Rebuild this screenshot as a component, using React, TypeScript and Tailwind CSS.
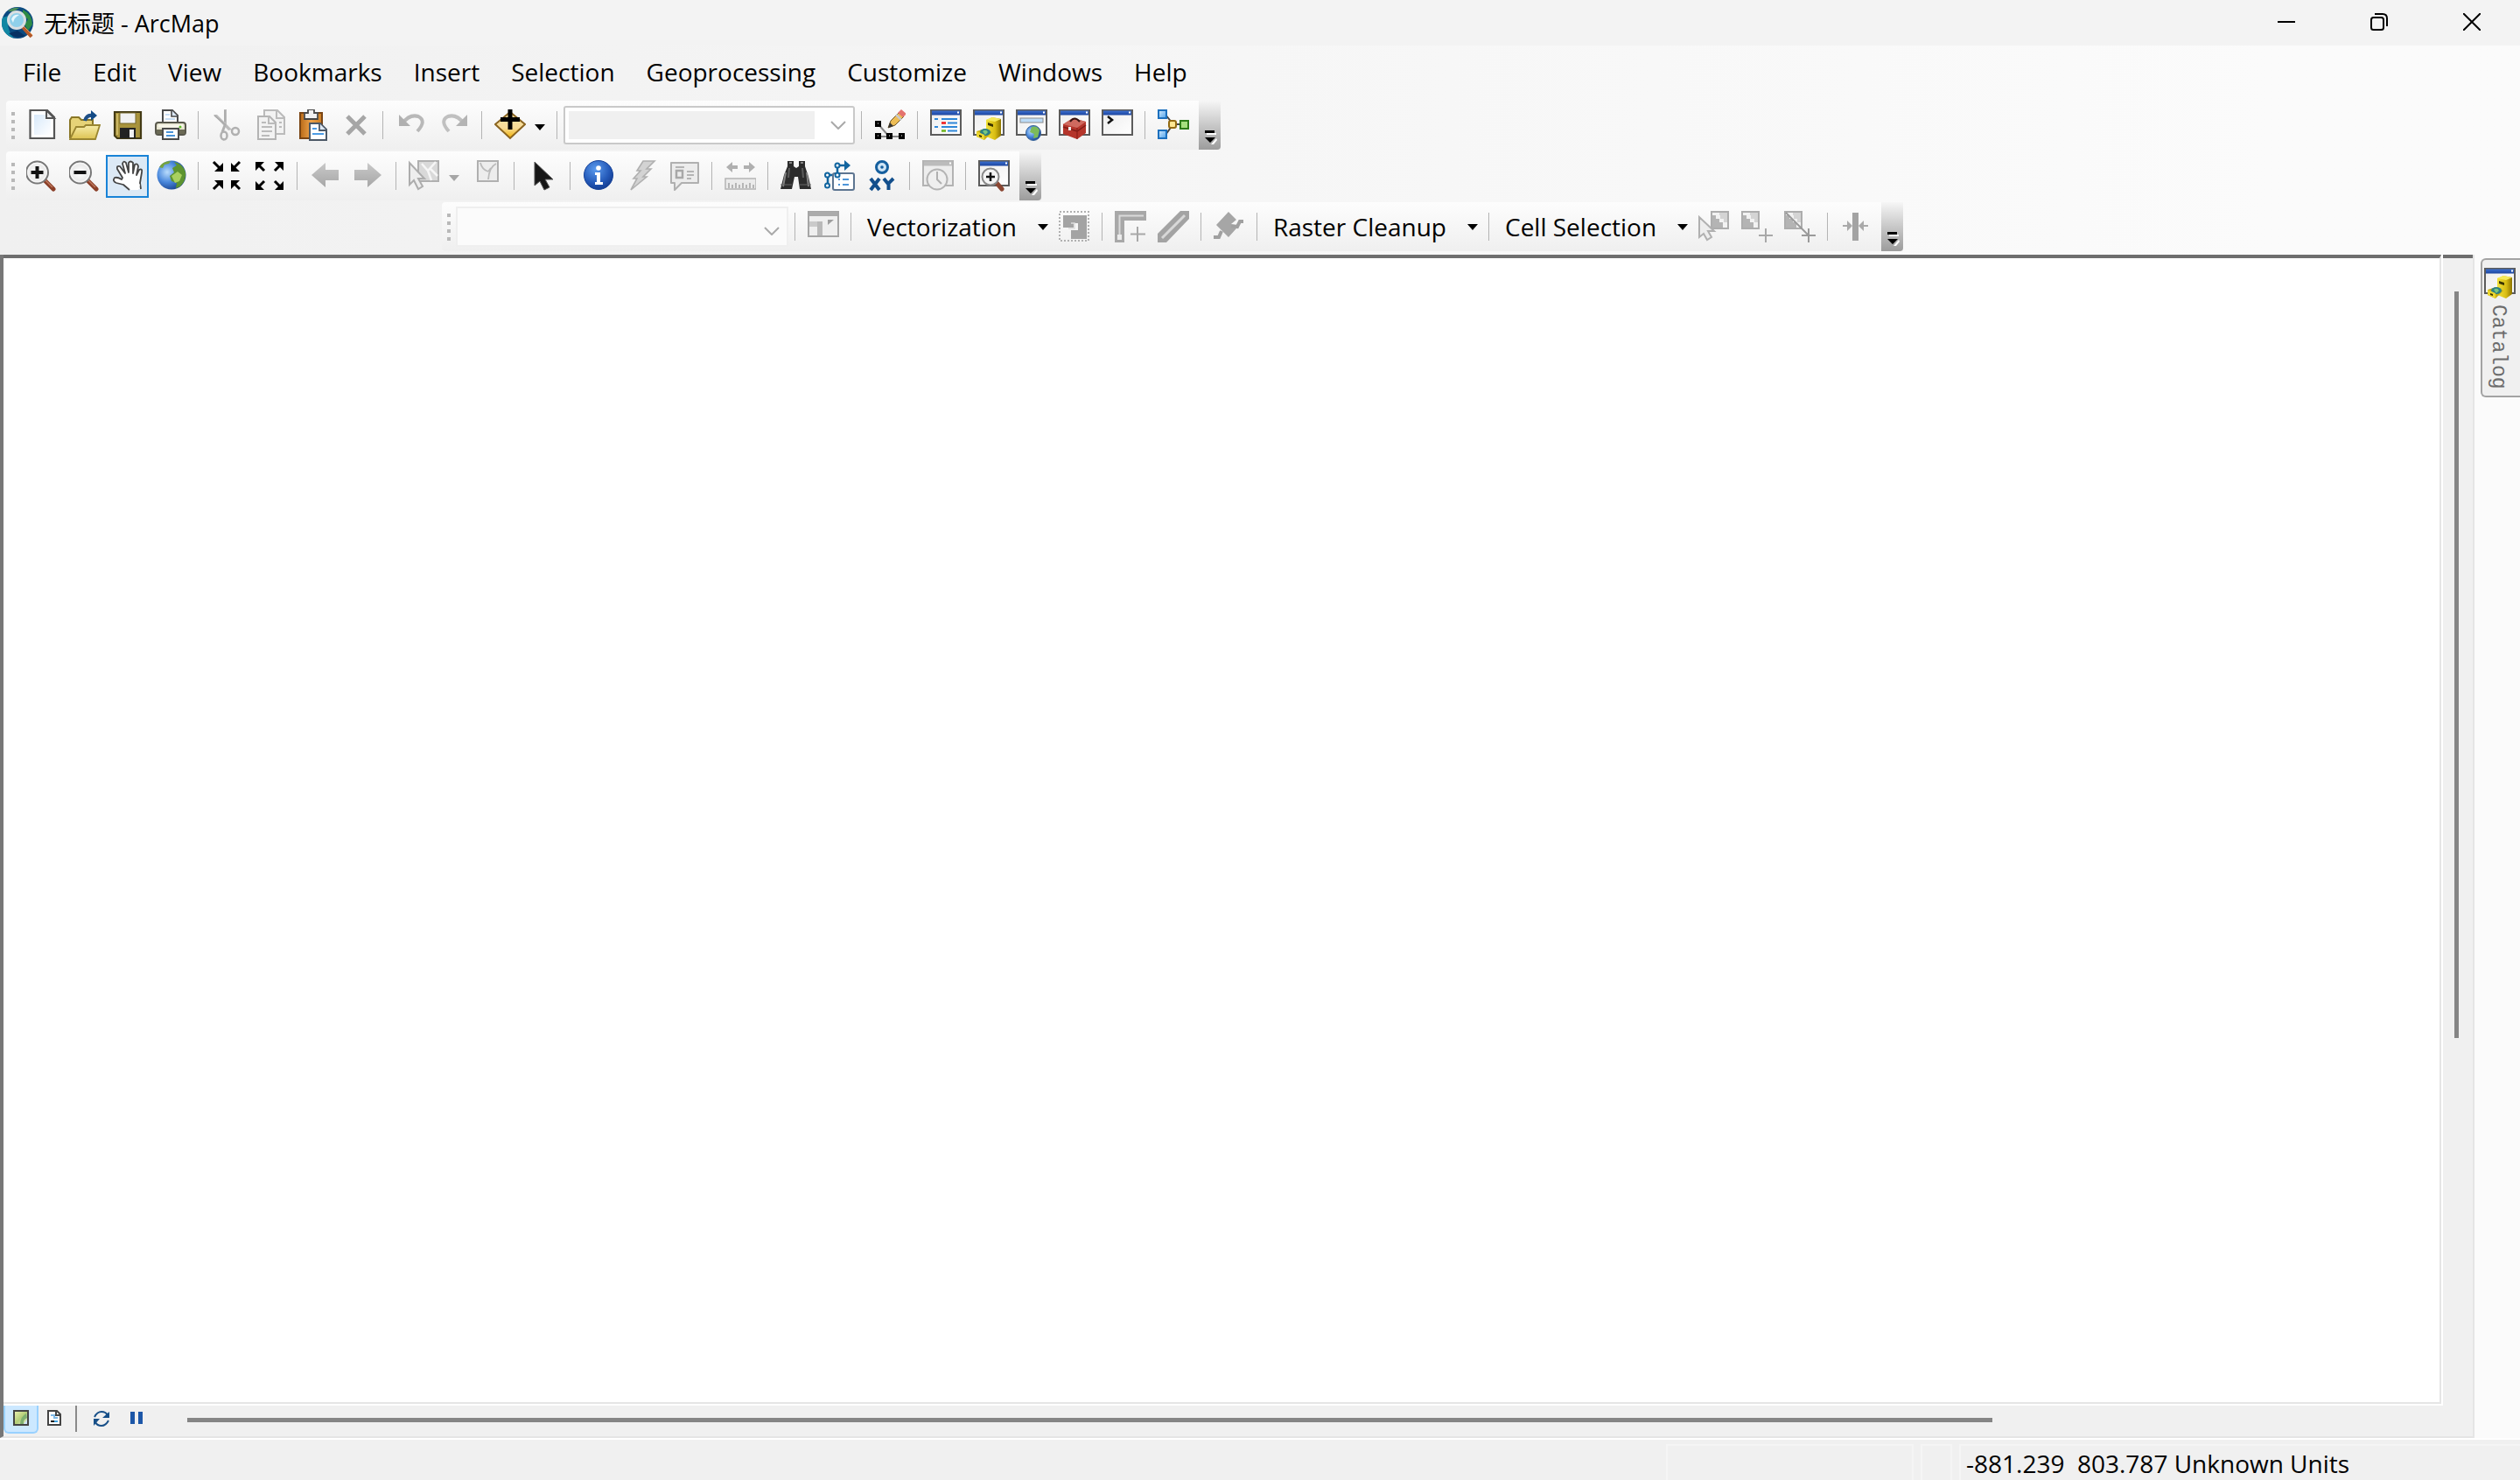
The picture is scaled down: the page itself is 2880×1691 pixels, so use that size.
import React from 'react';

interface IconProps {
  children: React.ReactNode;
  className?: string;
}

const Icon: React.FC<IconProps> = ({ children, className = '' }) => (
  <svg viewBox="0 0 36 36" fill="none" aria-hidden="true" className={`block h-9 w-9 shrink-0 ${className}`}>
    {children}
  </svg>
);

// Shared gradients for the toolbar drawings
const Gradients = () => (
  <svg width="0" height="0" className="absolute" aria-hidden="true">
    <defs>
      <linearGradient id="gold" x1="0" y1="0" x2="0" y2="1">
        <stop offset="0" stopColor="#f8e3a6" />
        <stop offset="0.6" stopColor="#f8dc98" />
        <stop offset="1" stopColor="#f0b000" />
      </linearGradient>
      <linearGradient id="folder" x1="0" y1="0" x2="0" y2="1">
        <stop offset="0" stopColor="#f7edaa" />
        <stop offset="1" stopColor="#dcc352" />
      </linearGradient>
      <linearGradient id="cabinet" x1="0" y1="0" x2="1" y2="0">
        <stop offset="0" stopColor="#f2e23a" />
        <stop offset="0.6" stopColor="#d9bd13" />
        <stop offset="1" stopColor="#8d7500" />
      </linearGradient>
      <linearGradient id="caption" x1="0" y1="0" x2="0" y2="1">
        <stop offset="0" stopColor="#3a6fd0" />
        <stop offset="1" stopColor="#1c449e" />
      </linearGradient>
      <linearGradient id="paper" x1="0" y1="0" x2="1" y2="1">
        <stop offset="0" stopColor="#d8e9fa" />
        <stop offset="1" stopColor="#ffffff" />
      </linearGradient>
      <linearGradient id="body" x1="0" y1="0" x2="1" y2="1">
        <stop offset="0" stopColor="#ececec" />
        <stop offset="1" stopColor="#ffffff" />
      </linearGradient>
      <linearGradient id="clip" x1="0" y1="0" x2="1" y2="0">
        <stop offset="0" stopColor="#b96a18" />
        <stop offset="0.5" stopColor="#eda24a" />
        <stop offset="1" stopColor="#cc7d22" />
      </linearGradient>
      <linearGradient id="greyArrow" x1="0" y1="0" x2="0" y2="1">
        <stop offset="0" stopColor="#c9c9c9" />
        <stop offset="1" stopColor="#a6a6a6" />
      </linearGradient>
      <radialGradient id="ocean" cx="0.35" cy="0.4" r="0.7">
        <stop offset="0" stopColor="#b9dcfc" />
        <stop offset="0.5" stopColor="#4a88dc" />
        <stop offset="1" stopColor="#123a86" />
      </radialGradient>
      <radialGradient id="info" cx="0.4" cy="0.3" r="0.8">
        <stop offset="0" stopColor="#5b9bee" />
        <stop offset="0.6" stopColor="#2459b8" />
        <stop offset="1" stopColor="#0f3484" />
      </radialGradient>
      <radialGradient id="lens" cx="0.5" cy="0.5" r="0.6">
        <stop offset="0" stopColor="#ffffff" />
        <stop offset="1" stopColor="#dedede" />
      </radialGradient>
      <linearGradient id="blueBox" x1="0" y1="0" x2="1" y2="1">
        <stop offset="0" stopColor="#d5ecff" />
        <stop offset="1" stopColor="#4aa0ea" />
      </linearGradient>
      <linearGradient id="dataView" x1="0" y1="0" x2="1" y2="1">
        <stop offset="0" stopColor="#f0f2b4" />
        <stop offset="0.5" stopColor="#b4ce78" />
        <stop offset="1" stopColor="#e8efd8" />
      </linearGradient>
    </defs>
  </svg>
);

const AppIcon = () => (
  <Icon>
    <circle cx="18" cy="18" r="18" fill="#0b4a80" />
    <path d="M1 12 A18 18 0 0 0 8 33 L14 36 Q4 24 8 10Z" fill="#1187a3" />
    <path d="M24 3 Q35 8 35 20 L30 27 L26 20 L30 14 L24 10Z" fill="#2e8b45" />
    <path d="M7 5 Q12 0 20 1 L14 5Z" fill="#4a8f5a" />
    <path d="M8 30 Q16 37 27 33 L18 27Z" fill="#073163" />
    <path d="M24 23 L34 34" stroke="#b4592a" strokeWidth="4" />
    <path d="M25 22 L35 32" stroke="#e59a5c" strokeWidth="1" />
    <circle cx="17" cy="15" r="9.5" fill="#8fd0ea" stroke="#d9dfe2" strokeWidth="3" />
    <path d="M11 14 Q13 8 20 9 Q14 12 13 18Z" fill="#e6f7fd" />
  </Icon>
);

const NewIcon = () => (
  <Icon>
    <path d="M4.500 1 H24 L32 9 V33 H4.500Z" fill="#fff" stroke="#555" strokeWidth="2.2" />
    <path d="M9 6 H22 V12 H28 V29 H9Z" fill="url(#paper)" />
    <path d="M23 1 V10 H32Z" fill="#e8e8e8" stroke="#555" strokeWidth="2" />
  </Icon>
);

const OpenIcon = () => (
  <Icon>
    <path d="M1 33 V12 L3 9 H11 L14 12 H27 V20" fill="#e6d377" stroke="#8a7726" strokeWidth="2" />
    <path d="M1 34 L8 20 H17 L19 18 H35 L30 34Z" fill="url(#folder)" stroke="#9a8631" strokeWidth="1.800" />
    <path d="M18 13 Q20 6 26 7" stroke="#1e4f86" strokeWidth="4" />
    <path d="M25 1 L32 7 L25 13Z" fill="#134a86" />
  </Icon>
);

const SaveIcon = () => (
  <Icon>
    <path d="M3 3 H33 V33 H6 L3 30Z" fill="#a8933c" stroke="#433a14" strokeWidth="2.2" />
    <path d="M6 5 V29" stroke="#cbb765" strokeWidth="2" />
    <rect x="9" y="4" width="18" height="12" fill="#f1f1f1" stroke="#77682a" strokeWidth="1" />
    <rect x="9" y="21" width="18" height="12" fill="#222" />
    <rect x="20" y="23" width="5" height="9" fill="#f0f0f0" />
  </Icon>
);

const PrintIcon = () => (
  <Icon>
    <path d="M9 16 V1 H20 L26 7 V16" fill="#fff" stroke="#4a4a4a" strokeWidth="2" />
    <path d="M19 1 V8 H26" fill="#dbe8f7" stroke="#4a4a4a" strokeWidth="1.600" />
    <path d="M12 6 H17 M12 11 H23" stroke="#c8ddf3" strokeWidth="2" />
    <rect x="1" y="15" width="34" height="14" rx="3" fill="#e6e4cf" stroke="#59584c" strokeWidth="2" />
    <path d="M2 23 H34 V28 H2Z" fill="#6b6a55" />
    <path d="M4 19 H32" stroke="#f8f7ea" strokeWidth="3" />
    <circle cx="29" cy="20" r="1.500" fill="#5fbf2a" />
    <rect x="9" y="22" width="18" height="12" fill="#fff" stroke="#4a4a4a" strokeWidth="2" />
    <path d="M13 26 H21 M13 30 H23" stroke="#4a93d8" strokeWidth="2" />
  </Icon>
);

const CutIcon = () => (
  <Icon>
    <path d="M3 6 L7 6 L24 23 L20 24Z M15 0 L18 0 L18 20 L15 16Z" fill="#bcbcbc" />
    <path d="M16 1 V14 M4 7 L17 18" stroke="#a9a9a9" strokeWidth="1.500" />
    <path d="M16 18 L13 26" stroke="#b0b0b0" strokeWidth="3" />
    <circle cx="28" cy="25" r="4" stroke="#b0b0b0" strokeWidth="2.500" />
    <ellipse cx="15" cy="30" rx="3.500" ry="4.500" stroke="#b0b0b0" strokeWidth="2.500" />
  </Icon>
);

const CopyIcon = () => (
  <Icon>
    <path d="M12 1 H27 L35 9 V28 H12Z" fill="#f2f2f2" stroke="#bbb" strokeWidth="2" />
    <path d="M26 1 V10 H35 M29 15 H32 M29 20 H32" stroke="#bbb" strokeWidth="2" />
    <path d="M5 8 H18 L25 15 V34 H5Z" fill="#f2f2f2" stroke="#b4b4b4" strokeWidth="2" />
    <path d="M17 8 V16 H25 M9 15 H14 M9 20 H21 M9 25 H21 M9 30 H18" stroke="#bbb" strokeWidth="2" />
  </Icon>
);

const PasteIcon = () => (
  <Icon>
    <rect x="4" y="4" width="25" height="29" fill="url(#clip)" stroke="#7a4514" strokeWidth="2" />
    <path d="M9 4 H13 V0 H20 V4 H24 V11 H9Z" fill="#f0f0f0" stroke="#4c4c4c" strokeWidth="1.800" />
    <path d="M9 11 H24" stroke="#444" strokeWidth="2" />
    <path d="M15 16 H27 L34 23 V35 H15Z" fill="#fff" stroke="#4c5866" strokeWidth="2" />
    <path d="M26 16 V24 H34" fill="#dde8f4" stroke="#4c5866" strokeWidth="1.800" />
    <path d="M18 22 H23 M18 28 H31" stroke="#4b9be4" strokeWidth="2" />
  </Icon>
);

const DeleteIcon = () => (
  <Icon>
    <path d="M9 8 L29 28 M29 8 L9 28" stroke="#a6a6a6" strokeWidth="5" />
  </Icon>
);

const UndoIcon = () => (
  <Icon>
    <path d="M8 16 Q16 5 26 8 Q36 13 25 25" stroke="#b8b8b8" strokeWidth="4" />
    <path d="M4 6 V19 H17Z" fill="#b0b0b0" />
  </Icon>
);

const RedoIcon = () => (
  <Icon>
    <path d="M29 16 Q21 5 11 8 Q1 13 12 25" stroke="#c0c0c0" strokeWidth="4" />
    <path d="M33 6 V19 H20Z" fill="#b4b4b4" />
  </Icon>
);

const AddDataIcon = () => (
  <Icon>
    <path d="M1 17 L18 3 L35 17 L18 33Z" fill="url(#gold)" stroke="#8a6420" strokeWidth="2" />
    <path d="M18 0 V23 M7 11.500 H29" stroke="#000" strokeWidth="5" />
  </Icon>
);

const EditorIcon = () => (
  <Icon>
    <path d="M4 16 L17 31 M4 31 H31" stroke="#888" strokeWidth="2" />
    <path d="M1 13 H8 V20 H1Z M1 27 H8 V34 H1Z M14 27 H21 V34 H14Z M28 27 H35 V34 H28Z" fill="#000" />
    <path d="M4 16 H5 M4 30 H5 M17 30 H18 M31 30 H32" stroke="#fff" />
    <path d="M16 21 L19 13 L29 3 L34 8 L24 18Z" fill="#edbd55" stroke="#6e5628" strokeWidth="1" />
    <path d="M16 21 L18 15 L22 19Z" fill="#333" />
    <path d="M27 4 L31 0 L37 5 L33 9Z" fill="#e4736f" />
    <path d="M25 6 L31 12" stroke="#c9c9c9" strokeWidth="2.500" />
  </Icon>
);

const WindowFrame: React.FC<{ disabled?: boolean }> = ({ disabled }) => (
  <>
    <rect x="1" y="1" width="34" height="28" fill={disabled ? '#ededed' : 'url(#body)'} stroke={disabled ? '#b3b3b3' : '#5b5b5b'} strokeWidth="2" />
    <rect x="2" y="1.500" width="32" height="5" fill={disabled ? '#bcbcbc' : 'url(#caption)'} />
    <rect x="31" y="2.500" width="2" height="2" fill="#fff" />
  </>
);

const TocIcon = () => (
  <Icon>
    <WindowFrame />
    <path d="M5 11 H9 M13 11 H31 M5 20 H9 M13 20 H31 M20 15.500 H31 M20 24.500 H31" stroke="#2f87d8" strokeWidth="2" />
    <path d="M13 15.500 H18" stroke="#f01818" strokeWidth="2.500" />
    <path d="M13 24.500 H18" stroke="#6cb51c" strokeWidth="2.500" />
  </Icon>
);

const CatalogIcon = () => (
  <Icon>
    <WindowFrame />
    <path d="M15 12 L22 9 L32 11 V30 L25 35 L15 31Z" fill="url(#cabinet)" />
    <path d="M15 12 L22 9 L32 11 L25 14Z" fill="#f5ea5a" />
    <path d="M17 15 L23 17 V20 L17 18Z" fill="#3a3300" />
    <path d="M4 25 L14 22 L22 26 L13 35 L4 31Z" fill="#c9ae12" />
    <ellipse cx="14" cy="26" rx="6" ry="4" fill="#2d7f83" />
    <path d="M11 25 Q15 22 17 26 L14 29Z" fill="#79c77d" />
    <path d="M4 25 L13 29 V35 L4 31Z" fill="#ead52d" />
    <path d="M7 29 L10 30 V32 L7 31Z" fill="#3a3300" />
  </Icon>
);

const SearchWindowIcon = () => (
  <Icon>
    <WindowFrame />
    <rect x="5" y="10" width="26" height="5" fill="#bcdcf8" stroke="#8d8d8d" strokeWidth="1" />
    <circle cx="20" cy="27" r="8.500" fill="url(#ocean)" stroke="#39659a" strokeWidth="1" />
    <path d="M18 20 Q25 18 27 24 L25 32 L20 33 L21 28 L16 26Z" fill="#7cbb5a" />
  </Icon>
);

const ToolboxIcon = () => (
  <Icon>
    <WindowFrame />
    <path d="M5 17 L16 10 L31 14 L31 27 L21 34 L5 28Z" fill="#b5352b" />
    <path d="M5 17 L16 10 L31 14 L21 21Z" fill="#cf6a5f" />
    <path d="M5 20 L21 25 L31 18" stroke="#7f1c16" strokeWidth="1.500" />
    <path d="M21 21 V34" stroke="#8e1f19" strokeWidth="1.200" />
    <path d="M13 14 Q18 7 24 14" stroke="#34110f" strokeWidth="2" />
    <rect x="11" y="20" width="3" height="4" fill="#eee" />
  </Icon>
);

const PythonWindowIcon = () => (
  <Icon>
    <WindowFrame />
    <path d="M7 8 L12 12 L7 16" stroke="#111" strokeWidth="2.500" />
  </Icon>
);

const ModelBuilderIcon = () => (
  <Icon>
    <path d="M9 6 L17 16 M9 29 L17 18 M20 17 H28" stroke="#444" strokeWidth="2" />
    <rect x="1" y="1" width="9" height="9" fill="url(#blueBox)" stroke="#1c70be" strokeWidth="2" />
    <rect x="1" y="24" width="9" height="9" fill="url(#blueBox)" stroke="#1c70be" strokeWidth="2" />
    <rect x="13" y="13" width="8" height="8" rx="2" fill="#ffe793" stroke="#936a12" strokeWidth="2" />
    <rect x="26" y="13" width="9" height="9" fill="#a6df7e" stroke="#2d7b17" strokeWidth="2" />
  </Icon>
);

const Magnifier: React.FC<{ sign: string }> = ({ sign }) => (
  <Icon>
    <path d="M21 23 L31 33" stroke="#8b3f28" strokeWidth="5" strokeLinecap="round" />
    <path d="M22 23 L30 31" stroke="#c07a5e" strokeWidth="1.500" />
    <circle cx="12.500" cy="14" r="12.500" fill="url(#lens)" stroke="#777" strokeWidth="2" />
    <circle cx="12.500" cy="14" r="10.500" stroke="#f4f4f4" strokeWidth="1.500" />
    <path d={sign} stroke="#111" strokeWidth="4" />
  </Icon>
);

const HandIcon = () => (
  <Icon>
    <path
      d="M20 34 L13 28 L5 26 Q0 24 3 20 Q6 19 11 22 L12 20 L6 10 Q5 6 9 7 L15 15 L12 4 Q13 0 16 3 L19 14 L19 3 Q21 0 24 3 L24 15 L26 5 Q29 3 30 7 L28 17 L31 11 Q35 9 34 14 L32 26 L33 33"
      fill="#fff"
      stroke="#444"
      strokeWidth="1.800"
      strokeLinejoin="round"
    />
    <path d="M18 27 L26 22 L32 28 L30 34 L22 34Z" fill="#fff" />
  </Icon>
);

const GlobeIcon = () => (
  <Icon>
    <circle cx="19" cy="17" r="16.500" fill="url(#ocean)" />
    <path d="M22 2 Q32 4 35 14 Q36 23 29 30 L24 32 L25 26 L19 24 L17 18 L22 14 L20 9 L25 6Z" fill="#5d9430" />
    <path d="M19 18 L26 13 L31 17 L28 24 L23 26Z" fill="#a9d05f" />
    <path d="M5 8 Q9 1 18 1 L16 4 L11 5 L9 9Z" fill="#76a23c" />
  </Icon>
);

const FixedZoomInIcon = () => (
  <Icon>
    <path d="M3 2 L10 9 M33 2 L26 9 M3 33 L10 26 M33 33 L26 26" stroke="#000" strokeWidth="3" />
    <path d="M14 3 V13 H4Z M23 3 V13 H33Z M14 33 V23 H4Z M23 33 V23 H33Z" fill="#000" />
  </Icon>
);

const FixedZoomOutIcon = () => (
  <Icon>
    <path d="M5 5 L12 12 M31 5 L24 12 M5 31 L12 24 M31 31 L24 24" stroke="#000" strokeWidth="3" />
    <path d="M2 12 V2 H12Z M34 12 V2 H24Z M2 24 V34 H12Z M34 24 V34 H24Z" fill="#000" />
  </Icon>
);

const BackIcon = () => (
  <Icon>
    <path d="M2 17 L18 3 V11 H33 V23 H18 V31Z" fill="url(#greyArrow)" />
  </Icon>
);

const ForwardIcon = () => (
  <Icon>
    <path d="M33 17 L17 3 V11 H2 V23 H17 V31Z" fill="url(#greyArrow)" />
  </Icon>
);

const SelectFeaturesIcon = () => (
  <Icon>
    <path d="M11 1 H34 V24 H11Z" fill="#d9d9d9" stroke="#b0b0b0" strokeWidth="2" />
    <path d="M15 4 L22 12 L31 2 M22 12 L26 23 M24 9 L33 18" stroke="#f6f6f6" strokeWidth="2.500" />
    <path d="M1 3 V28 L6 23 L11 33 L16 30 L11 21 H18Z" fill="#eee" stroke="#adadad" strokeWidth="2" />
  </Icon>
);

const ClearSelectionIcon = () => (
  <Icon>
    <rect x="8" y="1" width="23" height="23" fill="#ededed" stroke="#b0b0b0" strokeWidth="2" />
    <path d="M11 3 Q13 11 20 13 M29 4 Q21 8 20 22 M20 13 L23 9" stroke="#bbb" strokeWidth="1.800" />
  </Icon>
);

const PointerIcon = () => (
  <Icon>
    <path d="M9 2 V29 L15 24 L20 34 L26 31 L21 22 H30Z" fill="#161616" stroke="#555" strokeWidth="1" />
  </Icon>
);

const InfoIcon = () => (
  <Icon>
    <circle cx="18" cy="17" r="16.500" fill="url(#info)" stroke="#18449a" strokeWidth="1" />
    <circle cx="18" cy="9" r="2.800" fill="#fff" />
    <path d="M14 14 H20 V25 H23 V28 H14 V25 H16 V17 H14Z" fill="#fff" />
  </Icon>
);

const LightningIcon = () => (
  <Icon>
    <path d="M20 1 H33 L24 10 H29 L20 19 H24 L6 34 L13 21 H9 L17 12 H13Z" fill="#d3d3d3" stroke="#b0b0b0" strokeWidth="1.600" />
  </Icon>
);

const PopupIcon = () => (
  <Icon>
    <path d="M3 3 H34 V26 H15 L7 34 V26 H3Z" fill="#ececec" stroke="#b0b0b0" strokeWidth="2" strokeLinejoin="round" />
    <path d="M8 8 H18 M21 13 H29 M21 17 H29 M21 21 H26" stroke="#b4b4b4" strokeWidth="2" />
    <rect x="9" y="12" width="7" height="8" stroke="#a8a8a8" strokeWidth="2.500" />
  </Icon>
);

const MeasureIcon = () => (
  <Icon>
    <path d="M2 8 L9 2 V6 H15 V10 H9 V14Z M35 8 L28 2 V6 H22 V10 H28 V14Z" fill="#b0b0b0" />
    <rect x="1" y="21" width="35" height="12" fill="#ebebeb" stroke="#b4b4b4" strokeWidth="1.500" />
    <path d="M5 26 V32 M9 28 V32 M13 26 V32 M17 28 V32 M21 26 V32 M25 28 V32 M29 26 V32 M33 28 V32" stroke="#a8a8a8" strokeWidth="1.600" />
  </Icon>
);

const FindIcon = () => (
  <Icon>
    <path d="M8 1 H15 V7 L18 9 L21 7 V1 H28 V7 L32 19 L35 33 H22 L20 19 H16 L13 33 H0 L4 17 L8 7Z" fill="#2c2c2c" />
    <path d="M6 14 L3 30 M30 14 L32 30 M10 3 H13 M23 3 H26" stroke="#858585" strokeWidth="2" />
    <path d="M0 28 H13 M22 28 H35" stroke="#666" strokeWidth="1" />
    <path d="M10 9 L9 20 M25 9 L26 20" stroke="#5b5b5b" strokeWidth="2" />
  </Icon>
);

const RouteIcon = () => (
  <Icon>
    <path d="M5 28 V17 H16 V6 H25" stroke="#12659f" strokeWidth="2.500" />
    <path d="M24 0 L31 6 L24 12Z" fill="#12659f" />
    <circle cx="4.500" cy="29" r="2.500" fill="#fff" stroke="#12659f" strokeWidth="2" />
    <circle cx="4.500" cy="17" r="2.500" fill="#fff" stroke="#12659f" strokeWidth="2" />
    <circle cx="16" cy="6" r="2.500" fill="#fff" stroke="#12659f" strokeWidth="2" />
    <rect x="11" y="15" width="24" height="19" rx="2" fill="#fff" stroke="#5d7591" strokeWidth="2" />
    <circle cx="16" cy="17" r="2.500" fill="#fff" stroke="#12659f" strokeWidth="2" />
    <path d="M17 22 H19 M22 22 H29 M17 28 H19 M22 28 H29" stroke="#4d95d8" strokeWidth="2" />
  </Icon>
);

const GoToXYIcon = () => (
  <Icon>
    <circle cx="18" cy="8" r="6.500" fill="#cfe5f6" stroke="#155f9e" strokeWidth="3" />
    <circle cx="18" cy="8" r="1.800" fill="#155f9e" />
    <path d="M5 21 L15 34 M15 21 L5 34 M20 21 L25 27 L31 21 M25.500 27 V34" stroke="#134f8c" strokeWidth="4" />
  </Icon>
);

const TimeSliderIcon = () => (
  <Icon>
    <WindowFrame disabled />
    <circle cx="17" cy="22" r="11.500" fill="#efefef" stroke="#b4b4b4" strokeWidth="2" />
    <path d="M17 13 V22 L22 27" stroke="#b0b0b0" strokeWidth="2" />
  </Icon>
);

const ViewerWindowIcon = () => (
  <Icon>
    <WindowFrame />
    <path d="M21 26 L27 33" stroke="#8b4632" strokeWidth="5" strokeLinecap="round" />
    <circle cx="14" cy="19" r="9.500" fill="#f4f4f4" stroke="#888" strokeWidth="2" />
    <path d="M14 14 V24 M9 19 H19" stroke="#111" strokeWidth="2.500" />
  </Icon>
);

const RasterTargetIcon = () => (
  <Icon>
    <rect x="1" y="1" width="34" height="28" fill="#efefef" stroke="#a6a6a6" strokeWidth="2" />
    <rect x="2" y="1" width="32" height="5" fill="#ababab" />
    <path d="M2 12 H17 V28 H11 V18 H2Z" fill="#b9b9b9" />
    <path d="M2 12 H11 V18 H2Z" fill="#cacaca" />
    <path d="M23 10 H30 L23 16Z" fill="#9e9e9e" />
  </Icon>
);

const VectorizeIcon = () => (
  <Icon>
    <rect x="1" y="1" width="33" height="33" stroke="#b0b0b0" strokeWidth="2" strokeDasharray="2 2" />
    <path d="M5 5 H32 V32 H14 V22 H22 V14 H17 V19 H5Z" fill="#a3a3a3" />
    <path d="M14 14 H18 V20 H11" stroke="#ddd" strokeWidth="1.500" />
  </Icon>
);

const TraceIcon = () => (
  <Icon>
    <path d="M0 0 H36 V11 H11 V36 H0Z" fill="#a8a8a8" />
    <path d="M33 5.500 H5.500 V32" stroke="#dadada" strokeWidth="2" />
    <rect x="3" y="27" width="5" height="6" fill="#ececec" />
    <path d="M26 18 V35 M18 26.500 H35" stroke="#a8a8a8" strokeWidth="2" />
  </Icon>
);

const ShapeIcon = () => (
  <Icon>
    <path d="M0 26 L26 0 H36 V9 L10 36 H0Z" fill="#a3a3a3" />
    <path d="M5 31 L31 5" stroke="#d8d8d8" strokeWidth="3" />
  </Icon>
);

const SnapIcon = () => (
  <Icon>
    <path d="M17 1 L26 10 L20 15 L26 20 L17 30 L3 16Z" fill="#a6a6a6" />
    <path d="M0 30 H6 L9 23 M20 17 L27 18 L30 12 H34" stroke="#a0a0a0" strokeWidth="4" />
  </Icon>
);

const Checker = () => (
  <>
    <rect x="1" y="1" width="19" height="19" fill="#f2f2f2" stroke="#adadad" strokeWidth="2" />
    <path d="M2 5 H6 V9 H10 V13 H14 V19 H2Z" fill="#b4b4b4" />
    <path d="M10 2 H19 V13 H15 V9 H11 V5 H10Z" fill="#d4d4d4" />
  </>
);

const SelectCellsIcon = () => (
  <Icon>
    <g transform="translate(14)">
      <Checker />
    </g>
    <path d="M1 7 V30 L6 26 L10 33 L15 30 L11 23 H18Z" fill="#ededed" stroke="#b0b0b0" strokeWidth="2" />
  </Icon>
);

const AddCellsIcon = () => (
  <Icon>
    <Checker />
    <path d="M28 20 V36 M20 28 H36" stroke="#a8a8a8" strokeWidth="2" />
  </Icon>
);

const LineCellsIcon = () => (
  <Icon>
    <Checker />
    <path d="M2 2 L28 28" stroke="#9a9a9a" strokeWidth="2" />
    <path d="M28 20 V36 M20 28 H36" stroke="#9a9a9a" strokeWidth="2" />
  </Icon>
);

const WidthIcon = () => (
  <Icon>
    <rect x="14" y="2" width="7" height="32" fill="#a3a3a3" />
    <path d="M3 17 H10 M25 17 H32" stroke="#aaa" strokeWidth="2" />
    <path d="M8 11 L14 17 L8 23Z M27 11 L21 17 L27 23Z" fill="#aaa" />
  </Icon>
);

interface ToolButtonProps {
  label: string;
  active?: boolean;
  disabled?: boolean;
  children: React.ReactNode;
}

const ToolButton: React.FC<ToolButtonProps> = ({ label, active, disabled, children }) => (
  <button
    type="button"
    aria-label={label}
    aria-pressed={active}
    disabled={disabled}
    className={`flex h-[49px] w-[49px] shrink-0 items-center border-2 pl-[5px] ${
      active ? 'border-[#1883d7] bg-[#dce9f5]' : 'border-transparent'
    }`}
  >
    {children}
  </button>
);

const Separator = () => (
  <div className="flex w-[15px] shrink-0 justify-center">
    <span className="h-8 w-px bg-[#b4b4b4]" />
  </div>
);

const Caret: React.FC<{ disabled?: boolean }> = ({ disabled }) => (
  <svg viewBox="0 0 12 7" aria-hidden="true" className={`block h-[7px] w-3 shrink-0 ${disabled ? 'text-[#a6a6a6]' : 'text-black'}`}>
    <path d="M0 0 H12 L6 7Z" fill="currentColor" />
  </svg>
);

const DropArrow: React.FC<{ label: string; disabled?: boolean }> = ({ label, disabled }) => (
  <button type="button" aria-label={label} disabled={disabled} className="flex h-[49px] w-[22px] shrink-0 items-center pl-1 pt-1">
    <Caret disabled={disabled} />
  </button>
);

const MenuButton: React.FC<{ children: string }> = ({ children }) => (
  <button type="button" className="flex h-[49px] shrink-0 items-center gap-6 pr-[5px] pl-[11px]">
    <span className="whitespace-nowrap">{children}</span>
    <Caret />
  </button>
);

const Grip = () => (
  <div className="flex w-4 shrink-0 flex-col items-center gap-[5px]">
    <span className="h-1 w-1 bg-[#b9b9b9]" />
    <span className="h-1 w-1 bg-[#b9b9b9]" />
    <span className="h-1 w-1 bg-[#b9b9b9]" />
    <span className="h-1 w-1 bg-[#b9b9b9]" />
  </div>
);

const Chevron = () => (
  <svg viewBox="0 0 18 10" fill="none" aria-hidden="true" className="block h-[10px] w-[18px] shrink-0">
    <path d="M1 1 L9 9 L17 1" stroke="#a9a9a9" strokeWidth="2" />
  </svg>
);

const Overflow = () => (
  <button
    type="button"
    aria-label="Toolbar options"
    className="ml-[5px] flex w-[25px] shrink-0 items-end justify-center self-stretch rounded-br bg-linear-to-b from-[#f6f6f6] to-[#9c9c9c] pb-[5px]"
  >
    <svg viewBox="0 0 16 18" aria-hidden="true" className="block h-[18px] w-4">
      <path d="M4 4 H15 V6 H4Z M15 10 L9 17 L12 17 L16 12Z" fill="#fff" />
      <path d="M2 1 H13 V4 H2Z M2 9 H14 L8 15Z" fill="#000" />
    </svg>
  </button>
);

const Toolbar: React.FC<{ label: string; children: React.ReactNode }> = ({ label, children }) => (
  <div
    role="toolbar"
    aria-label={label}
    className="flex h-14 w-max items-center rounded-l bg-linear-to-b from-[#fdfdfd] to-[#efefef]"
  >
    <Grip />
    {children}
    <Overflow />
  </div>
);

const menus = ['File', 'Edit', 'View', 'Bookmarks', 'Insert', 'Selection', 'Geoprocessing', 'Customize', 'Windows', 'Help'];

const TitleBar = () => (
  <header className="flex h-[52px] shrink-0 items-center bg-[#f3f3f3] pl-0.5">
    <AppIcon />
    <h1 className="ml-3 flex-1 pt-0.5 text-[27px] leading-8">无标题 - ArcMap</h1>
    <div className="flex self-stretch pr-0.5 pb-0.5">
      <button type="button" aria-label="Minimize" className="flex w-[106px] items-center justify-center">
        <svg viewBox="0 0 20 20" className="h-5 w-5">
          <path d="M0 10 H20" stroke="#000" strokeWidth="2" />
        </svg>
      </button>
      <button type="button" aria-label="Restore" className="flex w-[106px] items-center justify-center">
        <svg viewBox="0 0 20 20" fill="none" className="h-5 w-5" stroke="#000" strokeWidth="2">
          <rect x="1" y="5" width="14" height="14" rx="2.500" />
          <path d="M5 1 H14 Q19 1 19 6 V15" />
        </svg>
      </button>
      <button type="button" aria-label="Close" className="flex w-[106px] items-center justify-center">
        <svg viewBox="0 0 20 20" className="h-5 w-5">
          <path d="M0 0 L20 20 M20 0 L0 20" stroke="#000" strokeWidth="2" />
        </svg>
      </button>
    </div>
  </header>
);

const StandardToolbar = () => (
  <Toolbar label="Standard">
    <ToolButton label="New"><NewIcon /></ToolButton>
    <ToolButton label="Open"><OpenIcon /></ToolButton>
    <ToolButton label="Save"><SaveIcon /></ToolButton>
    <ToolButton label="Print"><PrintIcon /></ToolButton>
    <Separator />
    <ToolButton label="Cut" disabled><CutIcon /></ToolButton>
    <ToolButton label="Copy" disabled><CopyIcon /></ToolButton>
    <ToolButton label="Paste"><PasteIcon /></ToolButton>
    <ToolButton label="Delete" disabled><DeleteIcon /></ToolButton>
    <Separator />
    <ToolButton label="Undo" disabled><UndoIcon /></ToolButton>
    <ToolButton label="Redo" disabled><RedoIcon /></ToolButton>
    <Separator />
    <ToolButton label="Add Data"><AddDataIcon /></ToolButton>
    <DropArrow label="Add Data options" />
    <Separator />
    <div className="flex h-11 w-[333px] shrink-0 items-center justify-between rounded-[3px] border-2 border-[#c9c9c9] bg-white pr-2 pl-1">
      <select aria-label="Map scale" disabled className="h-8 w-[281px] appearance-none bg-[#f0f0f0]" />
      <Chevron />
    </div>
    <Separator />
    <ToolButton label="Editor Toolbar"><EditorIcon /></ToolButton>
    <Separator />
    <ToolButton label="Table Of Contents"><TocIcon /></ToolButton>
    <ToolButton label="Catalog"><CatalogIcon /></ToolButton>
    <ToolButton label="Search"><SearchWindowIcon /></ToolButton>
    <ToolButton label="ArcToolbox"><ToolboxIcon /></ToolButton>
    <ToolButton label="Python"><PythonWindowIcon /></ToolButton>
    <Separator />
    <ToolButton label="ModelBuilder"><ModelBuilderIcon /></ToolButton>
  </Toolbar>
);

const ToolsToolbar = () => (
  <Toolbar label="Tools">
    <ToolButton label="Zoom In"><Magnifier sign="M12.500 7 V21 M5.500 14 H19.500" /></ToolButton>
    <ToolButton label="Zoom Out"><Magnifier sign="M5.500 14 H19.500" /></ToolButton>
    <ToolButton label="Pan" active><HandIcon /></ToolButton>
    <ToolButton label="Full Extent"><GlobeIcon /></ToolButton>
    <Separator />
    <ToolButton label="Fixed Zoom In"><FixedZoomInIcon /></ToolButton>
    <ToolButton label="Fixed Zoom Out"><FixedZoomOutIcon /></ToolButton>
    <Separator />
    <ToolButton label="Previous Extent" disabled><BackIcon /></ToolButton>
    <ToolButton label="Next Extent" disabled><ForwardIcon /></ToolButton>
    <Separator />
    <ToolButton label="Select Features" disabled><SelectFeaturesIcon /></ToolButton>
    <DropArrow label="Select options" disabled />
    <ToolButton label="Clear Selection" disabled><ClearSelectionIcon /></ToolButton>
    <Separator />
    <ToolButton label="Select Elements"><PointerIcon /></ToolButton>
    <Separator />
    <ToolButton label="Identify"><InfoIcon /></ToolButton>
    <ToolButton label="Hyperlink" disabled><LightningIcon /></ToolButton>
    <ToolButton label="HTML Popup" disabled><PopupIcon /></ToolButton>
    <Separator />
    <ToolButton label="Measure" disabled><MeasureIcon /></ToolButton>
    <Separator />
    <ToolButton label="Find"><FindIcon /></ToolButton>
    <ToolButton label="Find Route"><RouteIcon /></ToolButton>
    <ToolButton label="Go To XY"><GoToXYIcon /></ToolButton>
    <Separator />
    <ToolButton label="Time Slider" disabled><TimeSliderIcon /></ToolButton>
    <Separator />
    <ToolButton label="Viewer Window"><ViewerWindowIcon /></ToolButton>
  </Toolbar>
);

const ArcScanToolbar = () => (
  <Toolbar label="ArcScan">
    <div className="flex h-[46px] w-[380px] shrink-0 items-center justify-between border-2 border-[#efefef] bg-[#fbfbfb] pr-2">
      <select aria-label="Raster layer" disabled className="h-10 flex-1 appearance-none" />
      <div className="pt-2.5">
        <Chevron />
      </div>
    </div>
    <Separator />
    <ToolButton label="Edit Raster Snapping Options" disabled><RasterTargetIcon /></ToolButton>
    <Separator />
    <MenuButton>Vectorization</MenuButton>
    <ToolButton label="Generate Features" disabled><VectorizeIcon /></ToolButton>
    <Separator />
    <ToolButton label="Vectorization Trace" disabled><TraceIcon /></ToolButton>
    <ToolButton label="Shape Recognition" disabled><ShapeIcon /></ToolButton>
    <Separator />
    <ToolButton label="Raster Snapping" disabled><SnapIcon /></ToolButton>
    <Separator />
    <MenuButton>Raster Cleanup</MenuButton>
    <Separator />
    <MenuButton>Cell Selection</MenuButton>
    <ToolButton label="Select Connected Cells" disabled><SelectCellsIcon /></ToolButton>
    <ToolButton label="Find Connected Cell Area" disabled><AddCellsIcon /></ToolButton>
    <ToolButton label="Find Diagonal of Envelope" disabled><LineCellsIcon /></ToolButton>
    <Separator />
    <ToolButton label="Raster Line Width" disabled><WidthIcon /></ToolButton>
  </Toolbar>
);

const ViewBar = () => (
  <div className="flex h-[35px] items-start">
    <button
      type="button"
      aria-label="Data View"
      aria-pressed="true"
      className="flex h-8 w-10 justify-center rounded-b-md border-2 border-t-0 border-[#99d1ff] bg-[#cce8ff] pt-[5px]"
    >
      <svg viewBox="0 0 18 18" className="h-[18px] w-[18px]">
        <rect x="1" y="1" width="16" height="16" fill="url(#dataView)" stroke="#444" strokeWidth="2" />
        <path d="M15 4 Q8 8 8 16 L12 16 Q11 11 16 9Z" fill="#7fb070" />
        <path d="M12 16 L16 11 V16Z" fill="#cfe4f8" />
      </svg>
    </button>
    <button type="button" aria-label="Layout View" className="flex h-8 w-9 justify-center pt-[5px]">
      <svg viewBox="0 0 18 18" fill="none" className="h-[18px] w-[18px]">
        <path d="M2 1 H12 L16 5 V17 H2Z" fill="#fff" stroke="#444" strokeWidth="2" />
        <path d="M11 1 V6 H16" stroke="#444" strokeWidth="2" />
        <path d="M5 6 H9 V9 H13" stroke="#7fb9e6" strokeWidth="2" />
        <path d="M5 13 H9" stroke="#111" strokeWidth="2" />
        <path d="M9 13 H13" stroke="#3fa2e0" strokeWidth="2" />
      </svg>
    </button>
    <span className="mx-1.5 h-[30px] w-0.5 bg-[#8a8a8a]" />
    <button type="button" aria-label="Refresh View" className="flex h-8 w-11 justify-center pt-[5px]">
      <svg viewBox="0 0 20 20" fill="none" className="h-5 w-5">
        <path d="M2 8 Q5 2 10 2 Q15 2 17 6 M18 12 Q15 18 10 18 Q5 18 3 14" stroke="#174f88" strokeWidth="2" />
        <path d="M19 2 V9 H11Z M1 18 V10 H8Z" fill="#174f88" />
      </svg>
    </button>
    <button type="button" aria-label="Pause Drawing" className="flex h-8 w-9 justify-center pt-1.5">
      <svg viewBox="0 0 16 16" className="h-4 w-4">
        <path d="M1 1 H6 V15 H1Z M10 1 H15 V15 H10Z" fill="#1d57a8" />
      </svg>
    </button>
    <div className="ml-10 flex-1 pt-[14px]">
      <div className="h-[5px] w-[79%] bg-[#858585]" />
    </div>
  </div>
);

export default function App() {
  return (
    <div className="flex h-screen flex-col overflow-hidden bg-linear-to-r from-[#f0f0f0] to-[#fbfbfb] to-90% font-['Open_Sans','Noto_Sans_CJK_SC',sans-serif] text-black">
      <Gradients />
      <TitleBar />

      <nav aria-label="Main menu" className="flex h-[63px] shrink-0 items-center gap-9 pb-1 pl-[26px] text-[28px] leading-9">
        {menus.map((name) => (
          <button key={name} type="button">
            {name}
          </button>
        ))}
      </nav>

      <div className="flex shrink-0 flex-col gap-0.5 pb-1 pl-[7px] text-[28px] leading-9">
        <StandardToolbar />
        <ToolsToolbar />
        <div className="pl-[498px]">
          <ArcScanToolbar />
        </div>
      </div>

      <main className="flex min-h-0 flex-1">
        <section className="flex flex-1 flex-col border-r-2 border-b-2 border-l-4 border-r-[#e5e5e5] border-b-[#e5e5e5] border-l-[#777777] bg-[#f0f0f0]">
          <div className="flex min-h-0 flex-1">
            <div className="flex flex-1 border-r-2 border-b-2 border-white">
              <div className="flex-1 border-t-4 border-r-2 border-b-2 border-t-[#6e6e6e] border-r-[#e5e5e5] border-b-[#e5e5e5] bg-white" />
            </div>
            <div className="flex w-[34px] justify-center border-t-4 border-[#6e6e6e] pt-[38px] pr-1">
              <div className="h-[67%] w-[5px] bg-[#858585]" />
            </div>
          </div>
          <ViewBar />
        </section>
        <aside className="w-[52px] bg-[#fbfbfb] pt-1">
          <button
            type="button"
            className="ml-[7px] flex h-[159px] w-[45px] flex-col items-start rounded-l-md border-2 border-r-0 border-[#a3a3a3] bg-[#f0f0f0] pt-[9px] pl-0.5 text-[#6b6b6b]"
          >
            <CatalogIcon />
            <span className="mt-1.5 ml-0.5 font-['Liberation_Mono',monospace] text-[23px] leading-7 [writing-mode:vertical-rl]">Catalog</span>
          </button>
        </aside>
      </main>

      <footer className="flex h-12 shrink-0 justify-end gap-2 border-t-2 border-white bg-[#f0f0f0] pt-[5px] text-[28px] leading-9">
        <div className="w-[283px] border-2 border-b-0 border-[#f5f5f5]" />
        <div className="w-9 border-2 border-b-0 border-[#f5f5f5]" />
        <div className="flex w-[641px] items-center border-t-2 border-l-2 border-[#f5f5f5] pl-1.5 whitespace-pre">-881.239  803.787 Unknown Units</div>
      </footer>
    </div>
  );
}
